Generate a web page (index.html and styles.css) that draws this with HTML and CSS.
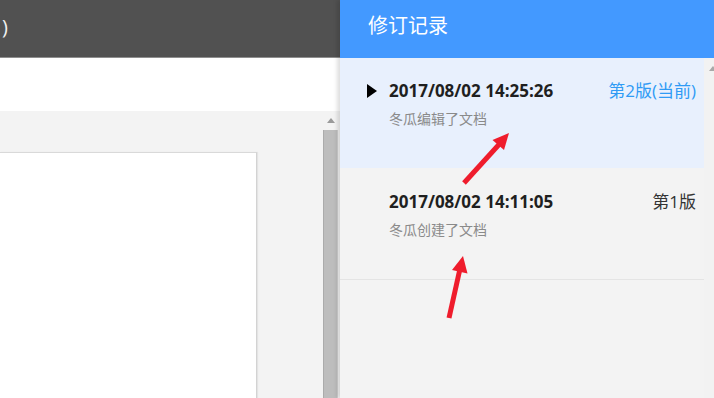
FILE: index.html
```html
<!DOCTYPE html>
<html lang="zh-CN">
<head>
<meta charset="utf-8">
<title>修订记录</title>
<link rel="stylesheet" href="styles.css">
</head>
<body>
<div class="app">
  <div class="editor">
    <div class="topbar"><span class="doc-title">)</span></div>
    <div class="toolbar"></div>
    <div class="workspace">
      <div class="canvas">
        <div class="page"></div>
      </div>
      <div class="vscroll">
        <div class="vscroll-btn"><span class="tri-up"></span></div>
        <div class="vscroll-thumb"></div>
      </div>
    </div>
  </div>
  <aside class="panel">
    <header class="panel-header">修订记录</header>
    <div class="panel-body">
      <ul class="revisions">
        <li class="rev rev-active">
          <span class="rev-marker"></span>
          <span class="rev-time">2017/08/02 14:25:26</span>
          <span class="rev-ver rev-ver-current">第2版(当前)</span>
          <span class="rev-desc">冬瓜编辑了文档</span>
        </li>
        <li class="rev">
          <span class="rev-spacer"></span>
          <span class="rev-time">2017/08/02 14:11:05</span>
          <span class="rev-ver">第1版</span>
          <span class="rev-desc">冬瓜创建了文档</span>
        </li>
      </ul>
      <div class="panel-scroll"><span class="tri-up tri-up-small"></span></div>
    </div>
  </aside>
  <svg class="annotations" width="714" height="398" viewBox="0 0 714 398" aria-hidden="true">
    <line x1="464" y1="183" x2="499" y2="144.5" stroke="#ef1c2c" stroke-width="5" stroke-linecap="butt"/>
    <polygon points="509,133 504,150 492.5,140" fill="#ef1c2c"/>
    <line x1="449" y1="318" x2="459.5" y2="271" stroke="#ef1c2c" stroke-width="5" stroke-linecap="butt"/>
    <polygon points="463,256 467.5,273.5 452,270" fill="#ef1c2c"/>
  </svg>
</div>
</body>
</html>
```
FILE: styles.css
```css
* { box-sizing: border-box; }

html, body {
  margin: 0;
  padding: 0;
}

body {
  width: 714px;
  height: 398px;
  overflow: hidden;
  font-family: "Open Sans", "Noto Sans CJK SC", sans-serif;
  background: #f3f3f3;
}

.app {
  position: relative;
  display: grid;
  grid-template-columns: 340px 374px;
  height: 398px;
  overflow: hidden;
}

/* ---------- editor (left) ---------- */
.editor {
  display: flex;
  flex-direction: column;
  height: 398px;
  overflow: hidden;
}

.topbar {
  height: 58px;
  flex: none;
  background: #515151;
  border-bottom: 1px solid #8e8e8e;
  padding: 14px 0 0 2px;
  color: #f2f2f2;
  font-size: 20px;
  line-height: 26px;
}

.toolbar {
  height: 53px;
  flex: none;
  background: #ffffff;
}

.workspace {
  flex: 1;
  display: flex;
  background: #f3f3f3;
  min-height: 0;
}

.canvas {
  width: 323px;
  padding-top: 41px;
}

.page {
  width: 257px;
  height: 300px;
  background: #ffffff;
  border-top: 1px solid #d9d9d9;
  border-right: 1px solid #d3d3d3;
  box-shadow: 1px 0 1px #e4e4e4;
}

.vscroll {
  width: 15px;
  display: flex;
  flex-direction: column;
}

.vscroll-btn {
  height: 19px;
  display: flex;
  justify-content: center;
  padding-top: 7px;
}

.tri-up {
  width: 0;
  height: 0;
  border-left: 4px solid transparent;
  border-right: 4px solid transparent;
  border-bottom: 5px solid #9a9a9a;
}

.vscroll-thumb {
  flex: 1;
  background: #bdbdbd;
  border-left: 1px solid #ababab;
  border-right: 1px solid #cfcfcf;
}

/* ---------- revision panel (right) ---------- */
.panel {
  position: relative;
  z-index: 1;
  display: flex;
  flex-direction: column;
  background: #f3f3f3;
  box-shadow: -3px 0 4px rgba(0, 0, 0, 0.13);
}

.panel-header {
  height: 58px;
  flex: none;
  background: #4399ff;
  color: #ffffff;
  font-family: "Noto Sans CJK SC", sans-serif;
  font-size: 20px;
  line-height: 24px;
  padding: 13px 0 0 28px;
}

.panel-body {
  flex: 1;
  display: flex;
}

.revisions {
  list-style: none;
  margin: 0;
  padding: 0;
  width: 364px;
}

.rev {
  display: grid;
  grid-template-columns: 49px 1fr auto;
  grid-template-rows: 22px 20px;
  row-gap: 6px;
  height: 112px;
  padding: 23px 8px 40px 0;
  border-bottom: 1px solid #e4e4e4;
}

.rev-active {
  height: 110px;
  padding-top: 22px;
  background: #e8f0fd;
  border-bottom: none;
}

.rev-marker {
  align-self: center;
  margin-left: 27px;
  width: 0;
  height: 0;
  border-left: 10px solid #000000;
  border-top: 7px solid transparent;
  border-bottom: 7px solid transparent;
}

.rev-time {
  font-weight: 700;
  font-size: 17px;
  line-height: 22px;
  color: #1f1f1f;
  white-space: nowrap;
}

.rev-ver {
  font-size: 17px;
  line-height: 22px;
  color: #333333;
  white-space: nowrap;
}

.rev-ver-current {
  color: #2f9bf5;
}

.rev-desc {
  grid-column: 2 / 4;
  font-family: "Noto Sans CJK SC", sans-serif;
  font-size: 14px;
  line-height: 20px;
  color: #8a8a8a;
}

.panel-scroll {
  width: 10px;
  padding: 8px 0 0 5px;
  overflow: hidden;
  background: #f2f2f2;
}

.tri-up-small {
  display: block;
  border-bottom-color: #a8a8a8;
}

/* ---------- annotation overlay ---------- */
.annotations {
  position: absolute;
  left: 0;
  top: 0;
  z-index: 2;
  pointer-events: none;
}
```
